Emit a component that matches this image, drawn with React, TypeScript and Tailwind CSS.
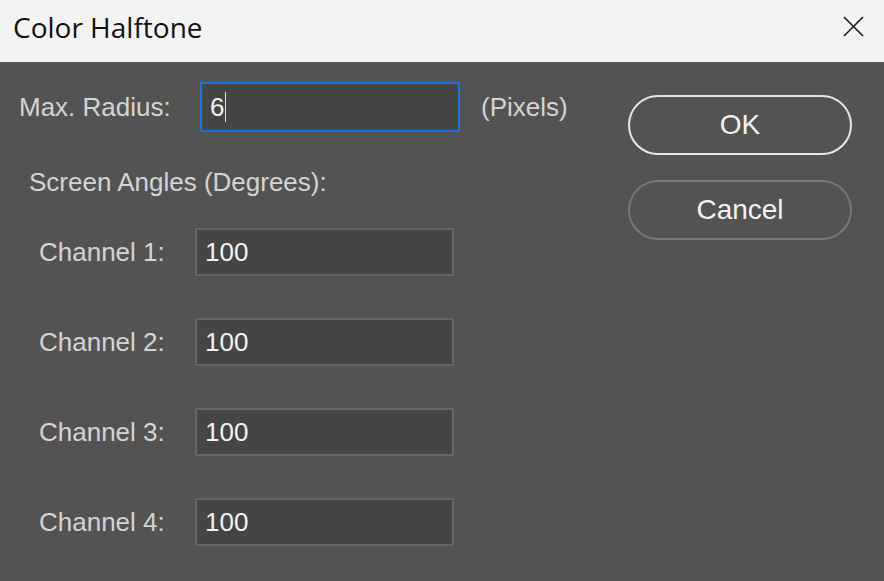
import React from "react";

const font = { fontFamily: '"Liberation Sans", Arial, sans-serif' };

function Row({ label }: { label: string }) {
  return (
    <div className="flex items-center h-[48px]">
      <div className="w-[195px] pl-[39px] text-[26px] text-[#d4d4d4] leading-none">{label}</div>
      <div className="w-[259px] h-[48px] bg-[#454545] border-2 border-[#666666] flex items-center pl-[8px] text-[26px] text-[#f2f2f2] leading-none">
        100
      </div>
    </div>
  );
}

export default function App() {
  return (
    <div className="w-[884px] h-[581px] flex flex-col bg-[#535353] overflow-hidden" style={font}>
      <div className="h-[62px] bg-[#f3f3f3] flex items-center justify-between pl-[13px] pr-[20px] pb-[9px]">
        <div className="text-[28px] text-[#111111] leading-none" style={{ fontFamily: '"Open Sans", "Noto Sans", sans-serif' }}>
          Color Halftone
        </div>
        <svg width="21" height="21" viewBox="0 0 21 21">
          <path d="M1 1 L20 20 M20 1 L1 20" stroke="#1a1a1a" strokeWidth="1.6" />
        </svg>
      </div>
      <div className="flex flex-1">
        <div className="w-[628px] flex flex-col">
          <div className="flex items-center mt-[20px] h-[50px]">
            <div className="w-[200px] pl-[19px] text-[26px] text-[#d4d4d4] leading-none">Max. Radius:</div>
            <div className="w-[260px] h-[50px] bg-[#454545] border-2 border-[#1a73e0] flex items-center pl-[8px] text-[26px] text-[#f2f2f2] leading-none">
              6<span className="inline-block w-px h-[30px] bg-[#e0e0e0] ml-[1px]"></span>
            </div>
            <div className="pl-[21px] text-[26px] text-[#d4d4d4] leading-none">(Pixels)</div>
          </div>
          <div className="pl-[29px] mt-[37px] text-[26px] text-[#d4d4d4] leading-none">Screen Angles (Degrees):</div>
          <div className="flex flex-col gap-[42px] mt-[33px]">
            <Row label="Channel 1:" />
            <Row label="Channel 2:" />
            <Row label="Channel 3:" />
            <Row label="Channel 4:" />
          </div>
        </div>
        <div className="flex flex-col gap-[25px] pt-[33px]">
          <div className="w-[224px] h-[60px] rounded-full border-2 border-[#e6e6e6] flex items-center justify-center text-[28px] text-[#f2f2f2] leading-none">
            OK
          </div>
          <div className="w-[224px] h-[60px] rounded-full border-2 border-[#777777] flex items-center justify-center text-[28px] text-[#f2f2f2] leading-none">
            Cancel
          </div>
        </div>
      </div>
    </div>
  );
}
